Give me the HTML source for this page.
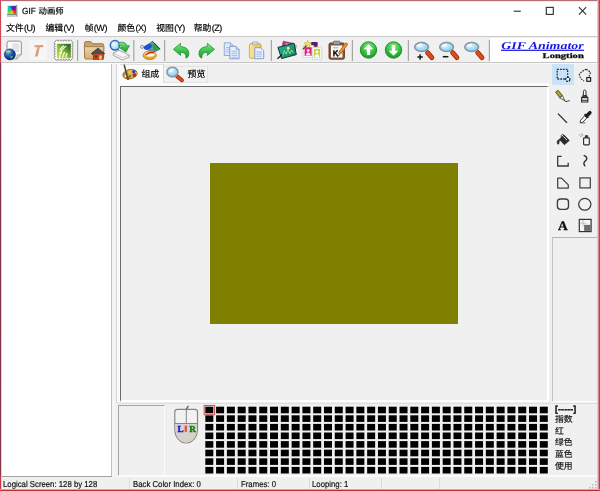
<!DOCTYPE html>
<html><head><meta charset="utf-8"><title>GIF Animator</title>
<style>
html,body{margin:0;padding:0}
body{width:600px;height:491px;overflow:hidden;background:#f0f0f0;position:relative;font-family:"Liberation Sans","Noto Sans CJK SC",sans-serif;font-size:10px;color:#000;text-rendering:geometricPrecision}
svg text{text-rendering:geometricPrecision}
div,span.a,svg.a{position:absolute;box-sizing:border-box}
.cj{font-family:"Liberation Sans","Noto Sans CJK SC",sans-serif}
.t{white-space:nowrap;line-height:1;filter:blur(.3px);-webkit-text-stroke:.18px currentColor}
.sx{transform:scaleX(.905);transform-origin:0 0}
.nx{display:inline-block;transform:scaleX(.93);transform-origin:0 0}
.sep{width:1px;background:#a8a8a8;top:40px;height:21px}
</style></head><body>
<svg width="0" height="0" style="position:absolute"><defs>
<radialGradient id="gGlobe" cx=".35" cy=".3" r=".8"><stop offset="0" stop-color="#5f9cff"/><stop offset=".6" stop-color="#1a3fae"/><stop offset="1" stop-color="#081a66"/></radialGradient>
<linearGradient id="gT" x1="0" y1="0" x2="1" y2="1"><stop offset="0" stop-color="#e6ac8a"/><stop offset="1" stop-color="#d28a62"/></linearGradient>
<linearGradient id="gStamp" x1="1" y1="0" x2="0" y2="1"><stop offset="0" stop-color="#27581f"/><stop offset=".3" stop-color="#4c8a2a"/><stop offset=".6" stop-color="#9cc636"/><stop offset="1" stop-color="#c6e040"/></linearGradient>
<linearGradient id="gFolder" x1="0" y1="0" x2="0" y2="1"><stop offset="0" stop-color="#edd3a8"/><stop offset="1" stop-color="#d2ad77"/></linearGradient>
<radialGradient id="gLens" cx=".4" cy=".35" r=".75"><stop offset="0" stop-color="#f2fbff"/><stop offset=".55" stop-color="#b9e3f7"/><stop offset="1" stop-color="#7cc3ea"/></radialGradient>
<linearGradient id="gGreen" x1="0" y1="0" x2="0" y2="1"><stop offset="0" stop-color="#86e886"/><stop offset=".5" stop-color="#3cc24a"/><stop offset="1" stop-color="#1d9a2c"/></linearGradient>
<linearGradient id="gGold" x1="0" y1="0" x2="0" y2="1"><stop offset="0" stop-color="#ffd95a"/><stop offset="1" stop-color="#e0a018"/></linearGradient>
<linearGradient id="gClip" x1="0" y1="0" x2="1" y2="0"><stop offset="0" stop-color="#f8e79a"/><stop offset="1" stop-color="#e9c95a"/></linearGradient>
<linearGradient id="gPhoto" x1="0" y1="0" x2="1" y2="1"><stop offset="0" stop-color="#22b8aa"/><stop offset="1" stop-color="#1f7a44"/></linearGradient>
<radialGradient id="gBall" cx=".5" cy=".3" r=".75"><stop offset="0" stop-color="#8cea8c"/><stop offset=".55" stop-color="#35bf3e"/><stop offset="1" stop-color="#13911f"/></radialGradient>
<linearGradient id="gPal" x1="0" y1="0" x2="1" y2="0"><stop offset="0" stop-color="#b98a30"/><stop offset=".5" stop-color="#dcb048"/><stop offset="1" stop-color="#eccb5c"/></linearGradient>
<radialGradient id="gLens2" cx=".4" cy=".35" r=".8"><stop offset="0" stop-color="#e6f7ff"/><stop offset=".5" stop-color="#a3dcf6"/><stop offset="1" stop-color="#73c2ec"/></radialGradient>

</defs></svg>
<div style="left:0px;top:0px;width:600px;height:36.5px;background:#fff"></div>
<div style="left:0px;top:36px;width:600px;height:1px;background:#c9c9c9"></div>
<div style="left:0px;top:62px;width:600px;height:1px;background:#c6c6c6"></div>
<div style="left:0px;top:63px;width:600px;height:1px;background:#f8f8f8"></div>
<div class="t" style="left:22px;top:6.9px;font-size:8.9px;color:#000"><span class="nx" style="width:16.6px">GIF</span><span class="cj" style="font-size:8.4px">动画师</span></div>
<div style="left:6.6px;top:5.4px;width:11px;height:11.2px;background:linear-gradient(#e4e4e4,#c9c9c9);"></div>
<div style="left:6.8px;top:13.9px;width:10.6px;height:1.5px;background:#7f8a84"></div>
<div style="left:7.6px;top:5.8px;width:8.6px;height:7.9px;background:conic-gradient(from 0deg at 52% 52%,#2438d8 0deg,#6a14b0 45deg,#d01468 90deg,#f0441a 135deg,#f2d814 180deg,#86e224 225deg,#22d466 270deg,#22bcc8 315deg,#2438d8 360deg);filter:blur(.3px)"></div>
<div style="left:16.3px;top:5.4px;width:1.2px;height:11px;background:#9a9a9a"></div>
<svg class="a" style="left:505px;top:0" width="95" height="22" viewBox="505 0 95 22" fill="none" stroke="#333" stroke-width="1.150"><path d="M513.7 11.2H520.8"/><rect x="546.3" y="7.4" width="7" height="7"/><path d="M578.9 7.2L586.2 14.6M586.2 7.2L578.9 14.6"/></svg>
<div class="t" style="left:6px;top:24.3px;font-size:9px"><span class="cj" style="font-size:8.8px">文件</span><span style="letter-spacing:-0.45px;margin-left:.3px">(U)</span></div>
<div class="t" style="left:45.5px;top:24.3px;font-size:9px"><span class="cj" style="font-size:8.8px">编辑</span><span style="letter-spacing:-0.45px;margin-left:.3px">(V)</span></div>
<div class="t" style="left:84.7px;top:24.3px;font-size:9px"><span class="cj" style="font-size:8.8px">帧</span><span style="letter-spacing:-0.45px;margin-left:.3px">(W)</span></div>
<div class="t" style="left:117.5px;top:24.3px;font-size:9px"><span class="cj" style="font-size:8.8px">颜色</span><span style="letter-spacing:-0.45px;margin-left:.3px">(X)</span></div>
<div class="t" style="left:156.3px;top:24.3px;font-size:9px"><span class="cj" style="font-size:8.8px">视图</span><span style="letter-spacing:-0.45px;margin-left:.3px">(Y)</span></div>
<div class="t" style="left:193.8px;top:24.3px;font-size:9px"><span class="cj" style="font-size:8.8px">帮助</span><span style="letter-spacing:-0.45px;margin-left:.3px">(Z)</span></div>
<div style="left:1.5px;top:63.4px;width:110px;height:413.1px;background:#fff"></div>
<div style="left:111px;top:64px;width:1px;height:413px;background:#c2c2c2"></div>
<div style="left:2px;top:476px;width:110px;height:1px;background:#a0a0a0"></div>
<div style="left:112px;top:64px;width:4px;height:413px;background:#f4f4f4"></div>
<div style="left:116px;top:64px;width:1px;height:338.5px;background:#d4d4d4"></div>
<div style="left:117px;top:64px;width:432px;height:21.5px;background:#f0f0f0"></div>
<div style="left:117px;top:64px;width:47px;height:22px;background:#fcfcfc;border-top:1px solid #e2e2e2;border-right:1px solid #dcdcdc"></div>
<div style="left:164px;top:65.5px;width:43.5px;height:17.5px;background:#f1f1f1;border:1px solid #e3e3e3;border-left:none"></div>
<div style="left:117px;top:83px;width:432px;height:3px;background:#fbfbfb"></div>
<div style="left:117px;top:64px;width:2.5px;height:338px;background:#fbfbfb"></div>
<div style="left:119.5px;top:85.5px;width:429.5px;height:316.5px;background:#f0f0f0;border-top:1.5px solid #6a6a6a;border-left:1.5px solid #6a6a6a;border-right:2px solid #fff;border-bottom:2px solid #fff"></div>
<div class="t" style="left:141.400px;top:69.600px"><span class="cj" style="font-size:8.9px">组成</span></div>
<div class="t" style="left:187.600px;top:69.600px"><span class="cj" style="font-size:8.9px">预览</span></div>
<div style="left:210px;top:162.5px;width:247.5px;height:161px;background:#808000"></div>
<div style="left:552.3px;top:64px;width:21.7px;height:20.8px;background:#cbe3f7"></div>
<div style="left:551.5px;top:236.5px;width:46px;height:165.5px;background:#f0f0f0;border-top:1px solid #b4b4b4;border-left:1px solid #c4c4c4;border-right:1px solid #fff;border-bottom:1.5px solid #fff"></div>
<div style="left:594.8px;top:64px;width:2.2px;height:172px;background:#eef0f6"></div>
<div style="left:117px;top:403px;width:481px;height:1px;background:#dedede"></div>
<div style="left:117px;top:475px;width:481px;height:1.5px;background:#fbfbfb"></div>
<div style="left:117.5px;top:405.3px;width:47.5px;height:70.7px;border-top:1px solid #a4a4a4;border-left:1px solid #a4a4a4;border-right:1.5px solid #fcfcfc;border-bottom:1.5px solid #fcfcfc;background:#f0f0f0"></div>
<svg class="a" style="left:0;top:0" width="600" height="491" viewBox="0 0 600 491" fill="#000"><rect x="205.30" y="406.70" width="8" height="6.6"/><rect x="216.09" y="406.70" width="8" height="6.6"/><rect x="226.88" y="406.70" width="8" height="6.6"/><rect x="237.67" y="406.70" width="8" height="6.6"/><rect x="248.46" y="406.70" width="8" height="6.6"/><rect x="259.25" y="406.70" width="8" height="6.6"/><rect x="270.04" y="406.70" width="8" height="6.6"/><rect x="280.83" y="406.70" width="8" height="6.6"/><rect x="291.62" y="406.70" width="8" height="6.6"/><rect x="302.41" y="406.70" width="8" height="6.6"/><rect x="313.20" y="406.70" width="8" height="6.6"/><rect x="323.99" y="406.70" width="8" height="6.6"/><rect x="334.78" y="406.70" width="8" height="6.6"/><rect x="345.57" y="406.70" width="8" height="6.6"/><rect x="356.36" y="406.70" width="8" height="6.6"/><rect x="367.15" y="406.70" width="8" height="6.6"/><rect x="377.94" y="406.70" width="8" height="6.6"/><rect x="388.73" y="406.70" width="8" height="6.6"/><rect x="399.52" y="406.70" width="8" height="6.6"/><rect x="410.31" y="406.70" width="8" height="6.6"/><rect x="421.10" y="406.70" width="8" height="6.6"/><rect x="431.89" y="406.70" width="8" height="6.6"/><rect x="442.68" y="406.70" width="8" height="6.6"/><rect x="453.47" y="406.70" width="8" height="6.6"/><rect x="464.26" y="406.70" width="8" height="6.6"/><rect x="475.05" y="406.70" width="8" height="6.6"/><rect x="485.84" y="406.70" width="8" height="6.6"/><rect x="496.63" y="406.70" width="8" height="6.6"/><rect x="507.42" y="406.70" width="8" height="6.6"/><rect x="518.21" y="406.70" width="8" height="6.6"/><rect x="529.00" y="406.70" width="8" height="6.6"/><rect x="539.79" y="406.70" width="8" height="6.6"/><rect x="205.30" y="415.30" width="8" height="6.6"/><rect x="216.09" y="415.30" width="8" height="6.6"/><rect x="226.88" y="415.30" width="8" height="6.6"/><rect x="237.67" y="415.30" width="8" height="6.6"/><rect x="248.46" y="415.30" width="8" height="6.6"/><rect x="259.25" y="415.30" width="8" height="6.6"/><rect x="270.04" y="415.30" width="8" height="6.6"/><rect x="280.83" y="415.30" width="8" height="6.6"/><rect x="291.62" y="415.30" width="8" height="6.6"/><rect x="302.41" y="415.30" width="8" height="6.6"/><rect x="313.20" y="415.30" width="8" height="6.6"/><rect x="323.99" y="415.30" width="8" height="6.6"/><rect x="334.78" y="415.30" width="8" height="6.6"/><rect x="345.57" y="415.30" width="8" height="6.6"/><rect x="356.36" y="415.30" width="8" height="6.6"/><rect x="367.15" y="415.30" width="8" height="6.6"/><rect x="377.94" y="415.30" width="8" height="6.6"/><rect x="388.73" y="415.30" width="8" height="6.6"/><rect x="399.52" y="415.30" width="8" height="6.6"/><rect x="410.31" y="415.30" width="8" height="6.6"/><rect x="421.10" y="415.30" width="8" height="6.6"/><rect x="431.89" y="415.30" width="8" height="6.6"/><rect x="442.68" y="415.30" width="8" height="6.6"/><rect x="453.47" y="415.30" width="8" height="6.6"/><rect x="464.26" y="415.30" width="8" height="6.6"/><rect x="475.05" y="415.30" width="8" height="6.6"/><rect x="485.84" y="415.30" width="8" height="6.6"/><rect x="496.63" y="415.30" width="8" height="6.6"/><rect x="507.42" y="415.30" width="8" height="6.6"/><rect x="518.21" y="415.30" width="8" height="6.6"/><rect x="529.00" y="415.30" width="8" height="6.6"/><rect x="539.79" y="415.30" width="8" height="6.6"/><rect x="205.30" y="423.90" width="8" height="6.6"/><rect x="216.09" y="423.90" width="8" height="6.6"/><rect x="226.88" y="423.90" width="8" height="6.6"/><rect x="237.67" y="423.90" width="8" height="6.6"/><rect x="248.46" y="423.90" width="8" height="6.6"/><rect x="259.25" y="423.90" width="8" height="6.6"/><rect x="270.04" y="423.90" width="8" height="6.6"/><rect x="280.83" y="423.90" width="8" height="6.6"/><rect x="291.62" y="423.90" width="8" height="6.6"/><rect x="302.41" y="423.90" width="8" height="6.6"/><rect x="313.20" y="423.90" width="8" height="6.6"/><rect x="323.99" y="423.90" width="8" height="6.6"/><rect x="334.78" y="423.90" width="8" height="6.6"/><rect x="345.57" y="423.90" width="8" height="6.6"/><rect x="356.36" y="423.90" width="8" height="6.6"/><rect x="367.15" y="423.90" width="8" height="6.6"/><rect x="377.94" y="423.90" width="8" height="6.6"/><rect x="388.73" y="423.90" width="8" height="6.6"/><rect x="399.52" y="423.90" width="8" height="6.6"/><rect x="410.31" y="423.90" width="8" height="6.6"/><rect x="421.10" y="423.90" width="8" height="6.6"/><rect x="431.89" y="423.90" width="8" height="6.6"/><rect x="442.68" y="423.90" width="8" height="6.6"/><rect x="453.47" y="423.90" width="8" height="6.6"/><rect x="464.26" y="423.90" width="8" height="6.6"/><rect x="475.05" y="423.90" width="8" height="6.6"/><rect x="485.84" y="423.90" width="8" height="6.6"/><rect x="496.63" y="423.90" width="8" height="6.6"/><rect x="507.42" y="423.90" width="8" height="6.6"/><rect x="518.21" y="423.90" width="8" height="6.6"/><rect x="529.00" y="423.90" width="8" height="6.6"/><rect x="539.79" y="423.90" width="8" height="6.6"/><rect x="205.30" y="432.50" width="8" height="6.6"/><rect x="216.09" y="432.50" width="8" height="6.6"/><rect x="226.88" y="432.50" width="8" height="6.6"/><rect x="237.67" y="432.50" width="8" height="6.6"/><rect x="248.46" y="432.50" width="8" height="6.6"/><rect x="259.25" y="432.50" width="8" height="6.6"/><rect x="270.04" y="432.50" width="8" height="6.6"/><rect x="280.83" y="432.50" width="8" height="6.6"/><rect x="291.62" y="432.50" width="8" height="6.6"/><rect x="302.41" y="432.50" width="8" height="6.6"/><rect x="313.20" y="432.50" width="8" height="6.6"/><rect x="323.99" y="432.50" width="8" height="6.6"/><rect x="334.78" y="432.50" width="8" height="6.6"/><rect x="345.57" y="432.50" width="8" height="6.6"/><rect x="356.36" y="432.50" width="8" height="6.6"/><rect x="367.15" y="432.50" width="8" height="6.6"/><rect x="377.94" y="432.50" width="8" height="6.6"/><rect x="388.73" y="432.50" width="8" height="6.6"/><rect x="399.52" y="432.50" width="8" height="6.6"/><rect x="410.31" y="432.50" width="8" height="6.6"/><rect x="421.10" y="432.50" width="8" height="6.6"/><rect x="431.89" y="432.50" width="8" height="6.6"/><rect x="442.68" y="432.50" width="8" height="6.6"/><rect x="453.47" y="432.50" width="8" height="6.6"/><rect x="464.26" y="432.50" width="8" height="6.6"/><rect x="475.05" y="432.50" width="8" height="6.6"/><rect x="485.84" y="432.50" width="8" height="6.6"/><rect x="496.63" y="432.50" width="8" height="6.6"/><rect x="507.42" y="432.50" width="8" height="6.6"/><rect x="518.21" y="432.50" width="8" height="6.6"/><rect x="529.00" y="432.50" width="8" height="6.6"/><rect x="539.79" y="432.50" width="8" height="6.6"/><rect x="205.30" y="441.10" width="8" height="6.6"/><rect x="216.09" y="441.10" width="8" height="6.6"/><rect x="226.88" y="441.10" width="8" height="6.6"/><rect x="237.67" y="441.10" width="8" height="6.6"/><rect x="248.46" y="441.10" width="8" height="6.6"/><rect x="259.25" y="441.10" width="8" height="6.6"/><rect x="270.04" y="441.10" width="8" height="6.6"/><rect x="280.83" y="441.10" width="8" height="6.6"/><rect x="291.62" y="441.10" width="8" height="6.6"/><rect x="302.41" y="441.10" width="8" height="6.6"/><rect x="313.20" y="441.10" width="8" height="6.6"/><rect x="323.99" y="441.10" width="8" height="6.6"/><rect x="334.78" y="441.10" width="8" height="6.6"/><rect x="345.57" y="441.10" width="8" height="6.6"/><rect x="356.36" y="441.10" width="8" height="6.6"/><rect x="367.15" y="441.10" width="8" height="6.6"/><rect x="377.94" y="441.10" width="8" height="6.6"/><rect x="388.73" y="441.10" width="8" height="6.6"/><rect x="399.52" y="441.10" width="8" height="6.6"/><rect x="410.31" y="441.10" width="8" height="6.6"/><rect x="421.10" y="441.10" width="8" height="6.6"/><rect x="431.89" y="441.10" width="8" height="6.6"/><rect x="442.68" y="441.10" width="8" height="6.6"/><rect x="453.47" y="441.10" width="8" height="6.6"/><rect x="464.26" y="441.10" width="8" height="6.6"/><rect x="475.05" y="441.10" width="8" height="6.6"/><rect x="485.84" y="441.10" width="8" height="6.6"/><rect x="496.63" y="441.10" width="8" height="6.6"/><rect x="507.42" y="441.10" width="8" height="6.6"/><rect x="518.21" y="441.10" width="8" height="6.6"/><rect x="529.00" y="441.10" width="8" height="6.6"/><rect x="539.79" y="441.10" width="8" height="6.6"/><rect x="205.30" y="449.70" width="8" height="6.6"/><rect x="216.09" y="449.70" width="8" height="6.6"/><rect x="226.88" y="449.70" width="8" height="6.6"/><rect x="237.67" y="449.70" width="8" height="6.6"/><rect x="248.46" y="449.70" width="8" height="6.6"/><rect x="259.25" y="449.70" width="8" height="6.6"/><rect x="270.04" y="449.70" width="8" height="6.6"/><rect x="280.83" y="449.70" width="8" height="6.6"/><rect x="291.62" y="449.70" width="8" height="6.6"/><rect x="302.41" y="449.70" width="8" height="6.6"/><rect x="313.20" y="449.70" width="8" height="6.6"/><rect x="323.99" y="449.70" width="8" height="6.6"/><rect x="334.78" y="449.70" width="8" height="6.6"/><rect x="345.57" y="449.70" width="8" height="6.6"/><rect x="356.36" y="449.70" width="8" height="6.6"/><rect x="367.15" y="449.70" width="8" height="6.6"/><rect x="377.94" y="449.70" width="8" height="6.6"/><rect x="388.73" y="449.70" width="8" height="6.6"/><rect x="399.52" y="449.70" width="8" height="6.6"/><rect x="410.31" y="449.70" width="8" height="6.6"/><rect x="421.10" y="449.70" width="8" height="6.6"/><rect x="431.89" y="449.70" width="8" height="6.6"/><rect x="442.68" y="449.70" width="8" height="6.6"/><rect x="453.47" y="449.70" width="8" height="6.6"/><rect x="464.26" y="449.70" width="8" height="6.6"/><rect x="475.05" y="449.70" width="8" height="6.6"/><rect x="485.84" y="449.70" width="8" height="6.6"/><rect x="496.63" y="449.70" width="8" height="6.6"/><rect x="507.42" y="449.70" width="8" height="6.6"/><rect x="518.21" y="449.70" width="8" height="6.6"/><rect x="529.00" y="449.70" width="8" height="6.6"/><rect x="539.79" y="449.70" width="8" height="6.6"/><rect x="205.30" y="458.30" width="8" height="6.6"/><rect x="216.09" y="458.30" width="8" height="6.6"/><rect x="226.88" y="458.30" width="8" height="6.6"/><rect x="237.67" y="458.30" width="8" height="6.6"/><rect x="248.46" y="458.30" width="8" height="6.6"/><rect x="259.25" y="458.30" width="8" height="6.6"/><rect x="270.04" y="458.30" width="8" height="6.6"/><rect x="280.83" y="458.30" width="8" height="6.6"/><rect x="291.62" y="458.30" width="8" height="6.6"/><rect x="302.41" y="458.30" width="8" height="6.6"/><rect x="313.20" y="458.30" width="8" height="6.6"/><rect x="323.99" y="458.30" width="8" height="6.6"/><rect x="334.78" y="458.30" width="8" height="6.6"/><rect x="345.57" y="458.30" width="8" height="6.6"/><rect x="356.36" y="458.30" width="8" height="6.6"/><rect x="367.15" y="458.30" width="8" height="6.6"/><rect x="377.94" y="458.30" width="8" height="6.6"/><rect x="388.73" y="458.30" width="8" height="6.6"/><rect x="399.52" y="458.30" width="8" height="6.6"/><rect x="410.31" y="458.30" width="8" height="6.6"/><rect x="421.10" y="458.30" width="8" height="6.6"/><rect x="431.89" y="458.30" width="8" height="6.6"/><rect x="442.68" y="458.30" width="8" height="6.6"/><rect x="453.47" y="458.30" width="8" height="6.6"/><rect x="464.26" y="458.30" width="8" height="6.6"/><rect x="475.05" y="458.30" width="8" height="6.6"/><rect x="485.84" y="458.30" width="8" height="6.6"/><rect x="496.63" y="458.30" width="8" height="6.6"/><rect x="507.42" y="458.30" width="8" height="6.6"/><rect x="518.21" y="458.30" width="8" height="6.6"/><rect x="529.00" y="458.30" width="8" height="6.6"/><rect x="539.79" y="458.30" width="8" height="6.6"/><rect x="205.30" y="466.90" width="8" height="6.6"/><rect x="216.09" y="466.90" width="8" height="6.6"/><rect x="226.88" y="466.90" width="8" height="6.6"/><rect x="237.67" y="466.90" width="8" height="6.6"/><rect x="248.46" y="466.90" width="8" height="6.6"/><rect x="259.25" y="466.90" width="8" height="6.6"/><rect x="270.04" y="466.90" width="8" height="6.6"/><rect x="280.83" y="466.90" width="8" height="6.6"/><rect x="291.62" y="466.90" width="8" height="6.6"/><rect x="302.41" y="466.90" width="8" height="6.6"/><rect x="313.20" y="466.90" width="8" height="6.6"/><rect x="323.99" y="466.90" width="8" height="6.6"/><rect x="334.78" y="466.90" width="8" height="6.6"/><rect x="345.57" y="466.90" width="8" height="6.6"/><rect x="356.36" y="466.90" width="8" height="6.6"/><rect x="367.15" y="466.90" width="8" height="6.6"/><rect x="377.94" y="466.90" width="8" height="6.6"/><rect x="388.73" y="466.90" width="8" height="6.6"/><rect x="399.52" y="466.90" width="8" height="6.6"/><rect x="410.31" y="466.90" width="8" height="6.6"/><rect x="421.10" y="466.90" width="8" height="6.6"/><rect x="431.89" y="466.90" width="8" height="6.6"/><rect x="442.68" y="466.90" width="8" height="6.6"/><rect x="453.47" y="466.90" width="8" height="6.6"/><rect x="464.26" y="466.90" width="8" height="6.6"/><rect x="475.05" y="466.90" width="8" height="6.6"/><rect x="485.84" y="466.90" width="8" height="6.6"/><rect x="496.63" y="466.90" width="8" height="6.6"/><rect x="507.42" y="466.90" width="8" height="6.6"/><rect x="518.21" y="466.90" width="8" height="6.6"/><rect x="529.00" y="466.90" width="8" height="6.6"/><rect x="539.79" y="466.90" width="8" height="6.6"/><rect x="204.2" y="405.5" width="10.400" height="9.200" fill="none" stroke="#cc5a5a" stroke-width="1.100"/></svg>
<div class="t" style="left:555px;top:405px;font-size:8.6px;font-weight:bold;letter-spacing:0.2px;-webkit-text-stroke:.3px #000">[-----]</div>
<div class="t" style="left:555px;top:415.2px;width:18px;height:10px;overflow:hidden;color:#111"><span class="cj" style="font-size:8.8px">指数</span></div>
<div class="t" style="left:555px;top:427.3px;width:18px;height:10px;overflow:hidden;color:#111"><span class="cj" style="font-size:8.8px">红</span></div>
<div class="t" style="left:555px;top:438.3px;width:18px;height:10px;overflow:hidden;color:#111"><span class="cj" style="font-size:8.8px">绿色</span></div>
<div class="t" style="left:555px;top:450px;width:18px;height:10px;overflow:hidden;color:#111"><span class="cj" style="font-size:8.8px">蓝色</span></div>
<div class="t" style="left:555px;top:461.8px;width:18px;height:10px;overflow:hidden;color:#111"><span class="cj" style="font-size:8.8px">使用</span></div>
<div style="left:0px;top:477px;width:600px;height:13px;background:#f0f0f0"></div>
<div class="t sx" style="left:2.6px;top:479.6px;font-size:8.6px;color:#111">Logical Screen: 128 by 128</div>
<div class="t sx" style="left:133px;top:479.6px;font-size:8.6px;color:#111">Back Color Index: 0</div>
<div class="t sx" style="left:240.5px;top:479.6px;font-size:8.6px;color:#111">Frames: 0</div>
<div class="t sx" style="left:312.4px;top:479.6px;font-size:8.6px;color:#111">Looping: 1</div>
<div style="left:129px;top:478px;width:1px;height:11px;background:#dcdcdc"></div>
<div style="left:237px;top:478px;width:1px;height:11px;background:#dcdcdc"></div>
<div style="left:309px;top:478px;width:1px;height:11px;background:#dcdcdc"></div>
<div style="left:381px;top:478px;width:1px;height:11px;background:#dcdcdc"></div>
<div style="left:439px;top:478px;width:1px;height:11px;background:#dcdcdc"></div>
<svg class="a" style="left:588px;top:480px" width="10" height="10" viewBox="0 0 10 10" fill="#b8b8b8"><rect x="7" y="1" width="1.5" height="1.5"/><rect x="7" y="4" width="1.5" height="1.5"/><rect x="4" y="4" width="1.5" height="1.5"/><rect x="7" y="7" width="1.5" height="1.5"/><rect x="4" y="7" width="1.5" height="1.5"/><rect x="1" y="7" width="1.5" height="1.5"/></svg>
<svg class="a" style="left:0;top:0;will-change:transform" width="600" height="491" viewBox="0 0 600 491"><!-- vertical separators -->
<g stroke="#a6a6a6" stroke-width="1.200">
<path d="M77.6 40v21M133.8 40v21M164.6 40v21M271.4 40v21M352.4 40v21M408.4 40v21M489.4 40v21"/>
</g>
<!-- 1 page + globe -->
<path d="M9 41.1h10.3q2 0 2 2v11.6l-4.3 4.2h-8q-2 0-2-2v-13.8q0-2 2-2z" fill="#fbfbfc" stroke="#8e8e9c" stroke-width="1"/>
<path d="M21.2 54.8h-3q-1.2 0-1.2 1.2v2.8" fill="#e4e4e8" stroke="#8e8e9c" stroke-width=".8"/>
<path d="M12.5 44.3h6.5M12.5 46.5h6.5M12.5 48.7h6.5M15 50.9h4" stroke="#cfcfd6" stroke-width="1.1"/>
<rect x="12.3" y="43.5" width="7" height="6" fill="#e2e2e8" opacity=".7"/>
<circle cx="9.9" cy="54.4" r="5.5" fill="url(#gGlobe)" stroke="#0c2066" stroke-width=".6"/>
<path d="M6.3 52.8q1.6-2.6 4.2-2.2q1.4 1.3-.4 2.6q-1 1.8-2.6 1.3q-1.400-.3-1.200-1.700zM10.300 56.300q1.500-1.200 3-.2q-.6 2-2.400 2.600q-1.200-.9-.6-2.400z" fill="#3fae3f"/>
<ellipse cx="8.2" cy="51.6" rx="2.4" ry="1.3" fill="#fff" opacity=".45"/>
<!-- 2 T (disabled) -->
<rect x="29.600" y="40.200" width="17.300" height="19.800" fill="#f6f6f6"/>
<path d="M34.600 45h8.800l-.5 2.200h-3.100l-2.200 9.400h-2.600l2.200-9.400h-3.100z" fill="url(#gT)"/>
<!-- 3 stamp -->
<path d="M55.50 41.40a1.35 1.35 0 0 1 2.70 0a1.35 1.35 0 0 1 2.70 0a1.35 1.35 0 0 1 2.70 0a1.35 1.35 0 0 1 2.70 0a1.35 1.35 0 0 1 2.70 0a1.35 1.35 0 0 1 2.70 0a1.25 1.25 0 0 1 0 2.50a1.25 1.25 0 0 1 0 2.50a1.25 1.25 0 0 1 0 2.50a1.25 1.25 0 0 1 0 2.50a1.25 1.25 0 0 1 0 2.50a1.25 1.25 0 0 1 0 2.50a1.25 1.25 0 0 1 0 2.50a1.35 1.35 0 0 1 -2.70 0a1.35 1.35 0 0 1 -2.70 0a1.35 1.35 0 0 1 -2.70 0a1.35 1.35 0 0 1 -2.70 0a1.35 1.35 0 0 1 -2.70 0a1.35 1.35 0 0 1 -2.70 0a1.25 1.25 0 0 1 0 -2.50a1.25 1.25 0 0 1 0 -2.50a1.25 1.25 0 0 1 0 -2.50a1.25 1.25 0 0 1 0 -2.50a1.25 1.25 0 0 1 0 -2.50a1.25 1.25 0 0 1 0 -2.50a1.25 1.25 0 0 1 0 -2.50z" fill="#fff" stroke="#7a7a7a" stroke-width=".75"/>
<rect x="56.800" y="43.800" width="14" height="14.400" fill="url(#gStamp)"/>
<path d="M59.600 57.600q.3-4.600 2.300-7.400q1.800-2.600 4.300-4.200M62.600 57.800q0-3.500 2.400-5.500M66 57.600q-.4-2.600 1.300-4.300M60 50q1.500-3 3.800-4.400" stroke="#fff" stroke-width="1.300" fill="none" opacity=".9"/>
<circle cx="60.600" cy="52.800" r="1.300" fill="#fff" opacity=".8"/>
<!-- 4 folder + house -->
<path d="M84.500 43.200q0-1.600 1.600-1.600h4.700l1.900 2.100h9.500q1.500 0 1.500 1.500v12.300h-19.200z" fill="#c8a36e" stroke="#94703f" stroke-width=".9"/>
<path d="M84.300 46.700h19.600l-.6 11.300q0 1.100-1.100 1.100h-16.300q-1.100 0-1.100-1.100z" fill="url(#gFolder)" stroke="#a27d4b" stroke-width=".9"/>
<path d="M91.300 53.600l6.700-5.600l6.700 5.600l-1 .9h-11.400z" fill="#4d4d4f" stroke="#2c2c2c" stroke-width=".6"/>
<rect x="93.200" y="53.600" width="10" height="6" fill="#c84f1c" stroke="#7c2c0c" stroke-width=".6"/>
<rect x="99.300" y="55.600" width="2.400" height="4" fill="#f0c9a0"/>
<rect x="94.800" y="55.300" width="2.600" height="2.300" fill="#7a2a10"/>
<!-- 5 globe + arrow + tray -->
<path d="M113.300 53l5.500-2.800l10.300 4.700v2.300l-6.600 2.800l-9.200-4.700z" fill="#f6f6f6" stroke="#9b9b9b" stroke-width=".9"/>
<path d="M113.300 53l9.200 4.700l6.600-2.800" fill="none" stroke="#bdbdbd" stroke-width=".8"/>
<circle cx="115" cy="45.300" r="4.700" fill="url(#gLens)" stroke="#2a68c8" stroke-width="1.500"/>
<path d="M119 42.600q6.400-1.700 8.200 3.400l2.200-.5l-3.400 6.600l-6-4.200l2.700-.7q-1-2-3.900-1.500z" fill="url(#gGreen)" stroke="#17832a" stroke-width=".7"/>
<!-- 6 picture + compass -->
<path d="M143.600 47.600l8.800-6.200l7.700 7.600l-6.600 3.400z" fill="#5b9ca2" stroke="#46565e" stroke-width=".8" stroke-linejoin="round"/>
<path d="M152.300 45.600l2.600-2.600l4.700 5.500l-5.400 2.800z" fill="#2f9c4c"/>
<ellipse cx="147.900" cy="46.900" rx="4.200" ry="2.400" fill="#1f4fd2" transform="rotate(-22 147.900 46.900)"/>
<path d="M152.400 41.400l7.700 7.600" stroke="#3c4448" stroke-width="1"/>
<circle cx="142" cy="46.900" r="1.500" fill="none" stroke="#7b8492" stroke-width=".9"/>
<ellipse cx="149.700" cy="55.300" rx="6.600" ry="4.300" fill="url(#gGold)" stroke="#a97a12" stroke-width=".8"/>
<ellipse cx="149.700" cy="54.300" rx="5" ry="2.600" fill="#fff5de" stroke="#c49a30" stroke-width=".4"/>
<path d="M146 54.800q3.400-2.900 7.300-2" stroke="#d4201e" stroke-width="1.500" fill="none" stroke-linecap="round"/>
<!-- 7/8 undo redo -->
<path id="undoP" d="M173.300 49.300l7.200-6v3.300q8.500.3 8.400 7.600q-.2 3-3 4q.8-5.800-5.400-6v3.300z" fill="url(#gGreen)" stroke="#1b8a2a" stroke-width=".7" stroke-linejoin="round"/>
<use href="#undoP" transform="translate(387.800 0) scale(-1 1)"/>
<!-- 9 copy -->
<path d="M224.300 42.800h6.200l3 3v9.700h-9.200z" fill="#dfe9fb" stroke="#8ea4d4" stroke-width=".9"/>
<path d="M230.500 42.800v3h3" fill="#c9d9f4" stroke="#8ea4d4" stroke-width=".7"/>
<path d="M226 47.500h5.500M226 49.700h5.500M226 51.900h3" stroke="#a9c0ea" stroke-width="1"/>
<path d="M229.800 46.300h6.300l3 3v9.500h-9.300z" fill="#e8f0ff" stroke="#7d96cf" stroke-width=".9"/>
<path d="M236.100 46.300v3h3" fill="#c9d9f4" stroke="#7d96cf" stroke-width=".7"/>
<path d="M231.500 51.200h6M231.500 53.300h6M231.500 55.400h6M231.500 57.300h6" stroke="#9db8ea" stroke-width="1"/>
<!-- 10 paste -->
<rect x="249.400" y="43.600" width="11.600" height="14.600" rx="1.500" fill="url(#gClip)" stroke="#c7a745" stroke-width=".9"/>
<rect x="252.400" y="42" width="5.600" height="2.900" rx=".8" fill="#dedede" stroke="#979797" stroke-width=".8"/>
<path d="M254.800 47.700h5.900l3 3v8h-8.900z" fill="#e8f0ff" stroke="#7d96cf" stroke-width=".9"/>
<path d="M256.400 52h5.500M256.400 54.100h5.500M256.400 56.200h5.500" stroke="#9db8ea" stroke-width="1"/>
<!-- 11 photos -->
<path d="M283.200 41.200l9.800 2l-1.600 8l-9.800-2z" fill="#c62aa0" stroke="#6a1458" stroke-width=".5"/>
<path d="M285.600 42.800l10.800 2.600l-2 9l-10.800-2.600z" fill="#c3cf34" stroke="#66701a" stroke-width=".5"/>
<path d="M277.900 47.400l16.200-4.100l2.200 11.300l-14.800 4z" fill="url(#gPhoto)" stroke="#10323a" stroke-width="1" stroke-linejoin="round"/>
<circle cx="288.300" cy="48.200" r="1.400" fill="#f4e8a0"/>
<path d="M282.600 55.800l1.800-5.200l1.800 3.600l1.800-4.600l2 4.200l1.600-3.800l1.800 3" fill="none" stroke="#86ea86" stroke-width="1" opacity=".9"/>
<path d="M277.400 58.800l4.800-4.200" stroke="#1b1b1b" stroke-width="1.300"/>
<!-- 12 stamps + wand -->
<rect x="311.200" y="42" width="6.400" height="6" fill="#5b1f60"/>
<rect x="303" y="45.600" width="10.400" height="11.800" fill="#fff" stroke="#b0b0b0" stroke-width=".6"/><rect x="303" y="45.600" width="10.400" height="11.800" fill="none" stroke="#f0f0f0" stroke-width="1.200" stroke-dasharray="0 2.020" stroke-linecap="round"/>
<rect x="304.600" y="47.200" width="7.200" height="8.600" fill="#e01f82"/>
<circle cx="308.200" cy="50.600" r="1.400" fill="#fff" opacity=".9"/><path d="M305.800 55.400q.4-3 2.400-3t2.400 3z" fill="#fff" opacity=".9"/>
<rect x="312.200" y="47.200" width="9.600" height="12" fill="#fff" stroke="#a8a8a8" stroke-width=".6"/><rect x="312.200" y="47.200" width="9.600" height="12" fill="none" stroke="#f0f0f0" stroke-width="1.200" stroke-dasharray="0 1.960" stroke-linecap="round"/>
<rect x="313.800" y="48.800" width="6.400" height="8.800" fill="#bcd636"/>
<circle cx="317" cy="51.800" r="1.500" fill="#fff"/><path d="M314.800 57.200q.3-3.200 2.200-3.200t2.200 3.200z" fill="#fff"/>
<path d="M307.600 40.400l1 2.300l2.500.2l-1.900 1.700l.6 2.500l-2.200-1.300l-2.200 1.300l.6-2.500l-1.900-1.700l2.500-.2z" fill="#ffe640" stroke="#c79a10" stroke-width=".5"/>
<path d="M306.400 45.600l-3.400 3.600" stroke="#7a4a20" stroke-width="1.500"/>
<!-- 13 clipboard K -->
<rect x="329" y="43" width="15.400" height="16.200" rx="1.600" fill="#8c5b35" stroke="#57331a" stroke-width=".9"/>
<rect x="331" y="45.500" width="11.400" height="12" fill="#fcfcfc"/>
<rect x="333.300" y="41.200" width="6.800" height="3.500" rx="1" fill="#9d9d9d" stroke="#555" stroke-width=".7"/>
<path d="M333 47.800h5.500" stroke="#a8a8a8" stroke-width="1"/>
<path d="M333.900 50.300v6.200M334.100 53.800l3.600-3.500M335.400 52.900l2.700 3.600" stroke="#151515" stroke-width="1.500" fill="none"/>
<path d="M346.200 44.200l-6.200 8.600" stroke="#a85a16" stroke-width="3.200" stroke-linecap="round"/>
<path d="M346.200 44.200l-6.200 8.600" stroke="#f0903a" stroke-width="2" stroke-linecap="round"/>
<path d="M339.300 53.700l.3 1.800l-1.600.5z" fill="#333"/>
<!-- 14/15 up/down -->
<circle cx="368.500" cy="50" r="8.200" fill="url(#gBall)" stroke="#17891f" stroke-width=".9"/>
<path d="M368.500 44.300l4.800 5h-3.100v5.700h-3.400v-5.700h-3.100z" fill="#fff"/>
<circle cx="393.500" cy="50" r="8.200" fill="url(#gBall)" stroke="#17891f" stroke-width=".9"/>
<path d="M393.500 55.700l4.800-5h-3.100v-5.700h-3.400v5.700h-3.100z" fill="#fff"/>
<!-- 16-18 magnifiers -->
<g id="magP">
<path d="M427.600 52.600l4.300 5" stroke="#8c2a0e" stroke-width="4.800" stroke-linecap="round"/>
<path d="M427.600 52.600l4.300 5" stroke="#e2481a" stroke-width="3.300" stroke-linecap="round"/>
<ellipse cx="421.600" cy="47" rx="6.900" ry="4.500" fill="url(#gLens2)" stroke="#8892a0" stroke-width="1.500"/>
<ellipse cx="419.400" cy="45.200" rx="3" ry="1.400" fill="#fff" opacity=".75" transform="rotate(-20 419.400 45.200)"/>
</g>
<use href="#magP" x="25"/>
<use href="#magP" x="50.100"/>
<path d="M417.400 57h5.400M420.100 54.300v5.400" stroke="#111" stroke-width="1.400"/>
<path d="M442.800 56.700h5.600" stroke="#111" stroke-width="1.500"/>
<!-- logo -->
<rect x="490" y="38" width="107" height="23.800" fill="#fff"/>
<text x="501.200" y="48.700" font-family="Liberation Serif, serif" font-weight="bold" font-style="italic" font-size="10.500" fill="#1616e6" textLength="82.500" lengthAdjust="spacingAndGlyphs">GIF Animator</text>
<rect x="501" y="49.700" width="83" height="1.200" fill="#1616e6"/>
<text x="542.600" y="57.800" font-family="Liberation Serif, serif" font-weight="bold" font-size="7.400" fill="#0a0a0a" stroke="#0a0a0a" stroke-width=".25" textLength="41.200" lengthAdjust="spacingAndGlyphs">Longtion</text>
<!-- tab: palette icon -->
<ellipse cx="130" cy="74.200" rx="7.300" ry="4.700" fill="url(#gPal)" stroke="#8f6a1e" stroke-width=".8" transform="rotate(-12 130 74.200)"/>
<ellipse cx="126" cy="76.200" rx="1.500" ry="1.100" fill="#f3ead0"/>
<circle cx="134.400" cy="75" r="1.900" fill="#cf2020"/>
<circle cx="133.800" cy="71.600" r="1.700" fill="#2341cc"/>
<circle cx="130" cy="76.400" r="1.300" fill="#3f9a30"/>
<circle cx="129.600" cy="72.400" r="1.300" fill="#e8d040"/>
<path d="M124.300 65.200l3 11.600" stroke="#4f452e" stroke-width="1.500" stroke-linecap="round"/>
<path d="M126.400 76.400l1.900-.4l.9 2.700q-.3 1.500-1.600 1.300q-1.300-.7-1.200-3.600z" fill="#8e3416"/>
<!-- tab: magnifier -->
<path d="M177.200 76.400l4.700 3.800" stroke="#8c2a0e" stroke-width="4" stroke-linecap="round"/>
<path d="M177.200 76.400l4.700 3.800" stroke="#e2481a" stroke-width="2.600" stroke-linecap="round"/>
<ellipse cx="172.400" cy="72" rx="5.500" ry="4.700" fill="url(#gLens2)" stroke="#8892a0" stroke-width="1.500"/>
<ellipse cx="171.200" cy="70.400" rx="2.600" ry="1.400" fill="#fff" opacity=".7" transform="rotate(-25 171.200 70.400)"/>
<g fill="none" stroke="#2b2b2b" stroke-width="1.250">
<!-- 1 marquee -->
<rect x="557.200" y="69.300" width="10.400" height="9.700" stroke="#1d2b44" stroke-width="1.300" stroke-dasharray="1.700 1.150"/>
<circle cx="567.800" cy="79.300" r="2.100" fill="#eef5fb" stroke="#1a1a1a" stroke-width="1.200" stroke-dasharray="2 .7"/>
<!-- 2 lasso -->
<path d="M586.300 69.300q-4.800 1.500-7 5.500q1 4.200 4.700 6.200M586.300 69.300l4.300 3l-1.900 4.700" stroke-dasharray="1.600 1.100" stroke-width="1.200" stroke-linejoin="round"/>
<rect x="586.800" y="77.600" width="3.800" height="3.700" fill="#f0f0f0" stroke="#1a1a1a" stroke-width="1.150"/>
<!-- 3 pencil -->
<path d="M555.600 92.100l2.500-1.800l4.400 5.300l-2.700 2.200z" fill="#a7a23e" stroke="#4b4a20" stroke-width=".9" stroke-linejoin="round"/>
<path d="M559.800 97.800l2.700-2.200l2.300 5.200z" fill="#f2f2ec" stroke="#333" stroke-width=".8" stroke-linejoin="round"/>
<path d="M564.600 100.600q1.400 1.700 2.700.7q1.100-1 2.500-.3" stroke="#333" stroke-width="1"/>
<!-- 4 brush -->
<path d="M583.400 95.600v-4q0-1.600 1.300-1.600t1.300 1.600v4z" fill="#fafafa" stroke-width="1"/>
<path d="M582.300 95.800h4.800v1.700h-4.800z" fill="#444" stroke-width=".8"/>
<path d="M581.600 97.600h6.200v4.400h-6.200z" fill="#fbfbfb" stroke-width="1.100"/>
<path d="M581.600 100.300h6.200" stroke-width="1"/>
<!-- 5 line -->
<path d="M558 113.600l9 9.300" stroke-width="1.350"/>
<!-- 6 eyedropper -->
<path d="M585.400 114.900l2.300 2.300l-5.200 5.200l-2.300.3l.3-2.300z" fill="#f8f8f8" stroke="#222" stroke-width=".9" stroke-linejoin="round"/>
<path d="M584.600 114.100l3.700 3.700" stroke="#1c1c1c" stroke-width="1.500"/>
<path d="M586.600 115.900l3.300-3.200" stroke="#1c1c1c" stroke-width="3.500" stroke-linecap="round"/>
<path d="M580.400 122.900h5" stroke="#555" stroke-width=".9"/>
<!-- 7 bucket -->
<path d="M559.400 139.400l4.600-4.300l5.200 5.400l-4.800 4.200z" fill="#2a2a2a" stroke-width=".9"/>
<path d="M563.200 136.300l3.800 3.800" stroke="#f0f0f0" stroke-width=".9"/>
<path d="M559.600 139.200q-2.600.8-2.400 3.400q.1 1.700 1 1.700q.8-.1.800-1.900z" fill="#1f1f1f" stroke-width=".7"/>
<path d="M561.200 137.600q-.6-3 1.400-3.200q1.400 0 1.700 1.700" stroke-width=".9"/>
<!-- 8 spray -->
<rect x="583.600" y="137.800" width="5.700" height="7" rx=".8" fill="#f6f6f6" stroke-width="1.150"/>
<path d="M585.400 137.600v-1.900h2.300v1.900" fill="#333" stroke-width=".9"/>
<path d="M579.200 135h.9M581 134.400h.9M580.400 136.400h.9M582.300 135.600h.9M582.200 133.800h.7" stroke="#666" stroke-width=".8"/>
<!-- 9 polyline -->
<path d="M561.700 156.400h-4v9.600h10.500v-3.200" stroke="#3a3a3a" stroke-width="1.300"/>
<!-- 10 curve -->
<path d="M584.200 155.600q4 1.800 1.900 4.600q-3.800 2.900-1.200 5.600" stroke-width="1.400" stroke-linecap="round"/>
<!-- 11 polygon -->
<path d="M557.700 178.100h3.800l6.800 6.800v3.200h-10.600z" stroke="#444" stroke-width="1.300" stroke-linejoin="round"/>
<!-- 12 rect -->
<rect x="579.900" y="177.900" width="10.400" height="10" stroke="#444" stroke-width="1.250"/>
<!-- 13 rounded rect -->
<rect x="557.400" y="199" width="11.100" height="10.400" rx="3.100" stroke="#3c3c3c" stroke-width="1.350"/>
<!-- 14 ellipse -->
<ellipse cx="584.800" cy="204.300" rx="6.100" ry="5.900" stroke="#3c3c3c" stroke-width="1.250"/>
<!-- 16 last -->
<rect x="579.300" y="219.400" width="11.800" height="12.200" stroke="#333" stroke-width="1.200" fill="#f6f6f6"/>
<rect x="584.600" y="225.200" width="5.400" height="5.300" fill="#6f6f6f" stroke="#555" stroke-width=".6"/>
<path d="M583 220v6.500M580 223.200h6.500" stroke="#aaa" stroke-width=".6"/>
</g>
<!-- 15 A -->
<text x="557.900" y="229.600" font-family="Liberation Serif, serif" font-weight="bold" font-size="13.200" fill="#0c0c0c" stroke="#0c0c0c" stroke-width=".3" textLength="9.700" lengthAdjust="spacingAndGlyphs">A</text>
<!-- mouse -->
<path d="M174.800 412q0-2.600 2.600-2.600h17.500q2.600 0 2.600 2.600v16.500c0 8.600-4.900 14.500-11.350 14.500s-11.350-5.900-11.350-14.500z" fill="#f2f2f2" stroke="#858585" stroke-width="1.150"/>
<path d="M175.400 423.600h21.500v4.900c0 8.200-4.600 13.900-10.750 13.900s-10.750-5.700-10.750-13.900z" fill="#d6d2ca"/>
<path d="M174.800 423.500h22.700M186.300 409.400v14.100" stroke="#858585" stroke-width="1" fill="none"/>
<path d="M186.400 409.200l1.700-2.900" stroke="#6a6a6a" stroke-width="1.500" fill="none" stroke-linecap="round"/>
<g font-family="Liberation Serif, serif" font-weight="bold" font-size="9.200" stroke-width=".35">
<text x="177.600" y="431.500" fill="#1010d8" stroke="#1010d8">L</text>
<text x="189.200" y="431.500" fill="#0c7a14" stroke="#0c7a14">R</text>
</g>
<rect x="184.700" y="425.600" width="2.200" height="6.200" fill="#e24848"/>
</svg>
<div style="left:0px;top:0px;width:600px;height:1px;background:#b86c78"></div>
<div style="left:0px;top:1px;width:600px;height:1px;background:rgba(220,150,165,0.22)"></div>
<div style="left:0px;top:0px;width:1px;height:491px;background:linear-gradient(#cf4758 0,#cf4758 62.5px,#85394a 63.5px,#7c3242 250px,#85394a 476px,#cc3444 477.5px,#cc3040 491px)"></div>
<div style="left:1px;top:0px;width:1px;height:491px;background:linear-gradient(rgba(235,170,180,.25) 0,rgba(235,170,180,.25) 62.5px,rgba(215,150,165,.38) 63.5px,rgba(215,150,165,.38) 476px,rgba(235,160,170,.4) 477.5px)"></div>
<div style="left:597px;top:0px;width:1px;height:491px;background:rgba(240,176,186,0.75)"></div>
<div style="left:598px;top:0px;width:1px;height:491px;background:#dd8a96"></div>
<div style="left:599px;top:0px;width:1px;height:491px;background:#b04450"></div>
<div style="left:0px;top:489px;width:600px;height:1px;background:#e3a3a8"></div>
<div style="left:0px;top:490px;width:600px;height:1px;background:#c42a34"></div>
</body></html>
